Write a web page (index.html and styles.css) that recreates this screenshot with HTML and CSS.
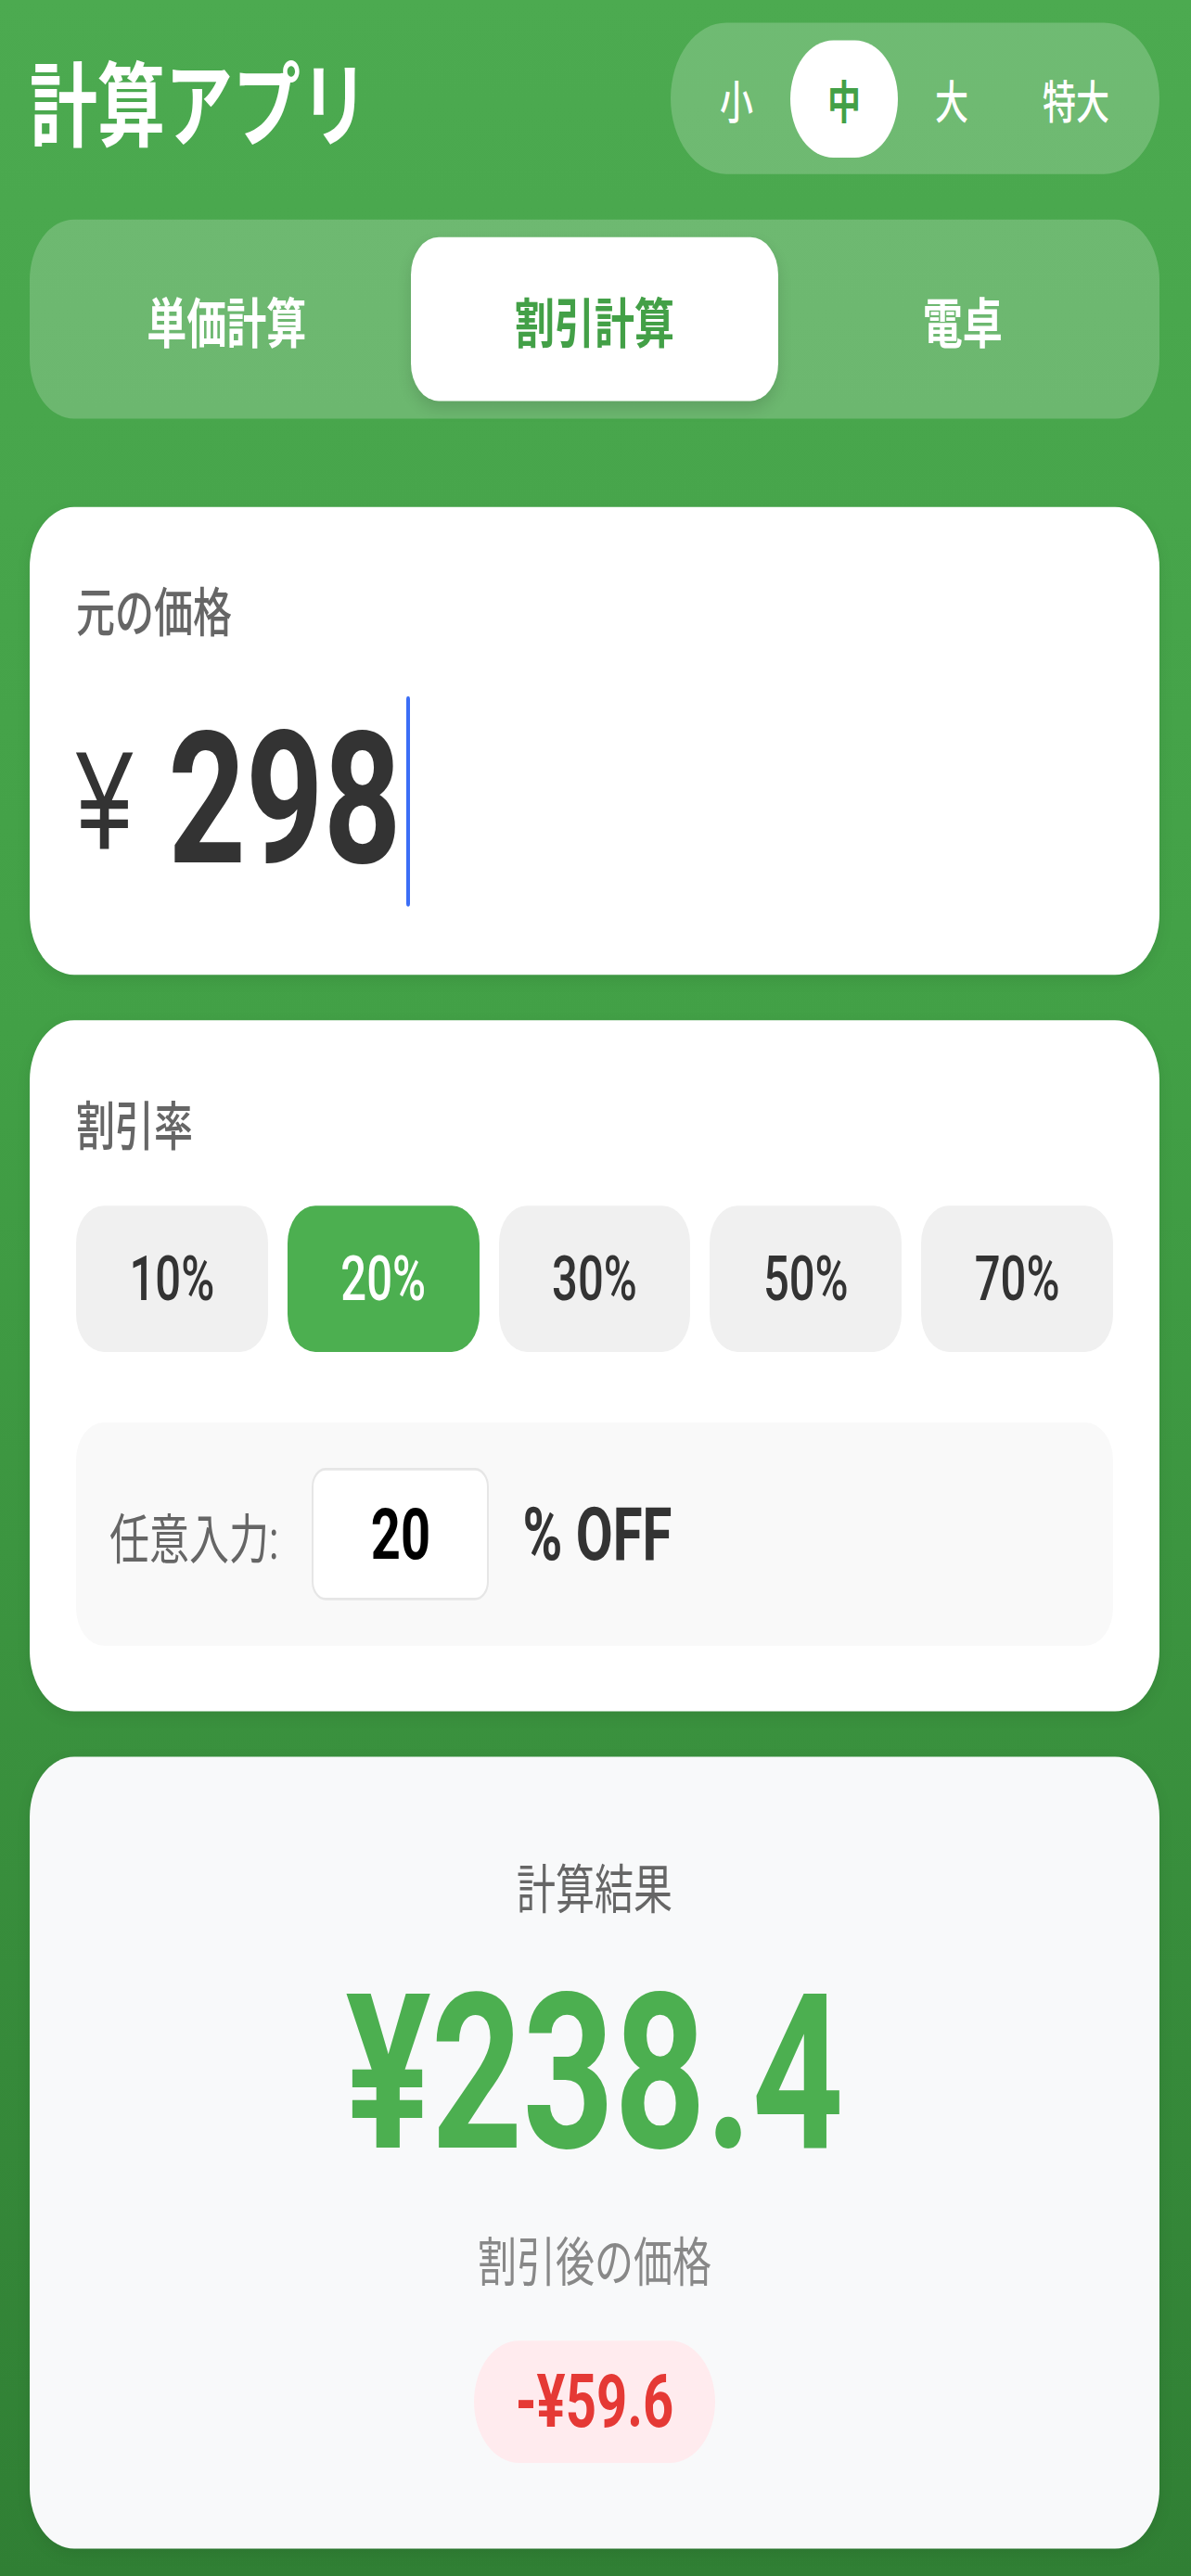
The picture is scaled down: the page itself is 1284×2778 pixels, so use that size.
FILE: index.html
```html
<!DOCTYPE html>
<html lang="ja">
<head>
<meta charset="utf-8">
<title>計算アプリ</title>
<link rel="stylesheet" href="styles.css">
</head>
<body>
<div class="app">
  <header class="header">
    <h1 class="title">計算アプリ</h1>
    <div class="size-toggle">
      <span class="size-btn">小</span>
      <span class="size-btn active">中</span>
      <span class="size-btn">大</span>
      <span class="size-btn">特大</span>
    </div>
  </header>

  <nav class="tabs">
    <div class="tab">単価計算</div>
    <div class="tab active">割引計算</div>
    <div class="tab">電卓</div>
  </nav>

  <section class="card">
    <div class="card-label">元の価格</div>
    <div class="price-row">
      <span class="yen">¥</span>
      <span class="price-value">298</span>
      <span class="caret"></span>
    </div>
  </section>

  <section class="card">
    <div class="card-label">割引率</div>
    <div class="rate-grid">
      <button class="rate-btn">10%</button>
      <button class="rate-btn active">20%</button>
      <button class="rate-btn">30%</button>
      <button class="rate-btn">50%</button>
      <button class="rate-btn">70%</button>
    </div>
    <div class="custom-row">
      <span class="custom-label">任意入力:</span>
      <input class="custom-input" type="text" value="20">
      <span class="custom-unit">% OFF</span>
    </div>
  </section>

  <section class="card result">
    <div class="result-title">計算結果</div>
    <div class="result-value">¥238.4</div>
    <div class="result-sub">割引後の価格</div>
    <div class="savings">-¥59.6</div>
  </section>
</div>
</body>
</html>
```

FILE: styles.css
```css
* {
  box-sizing: border-box;
  margin: 0;
  padding: 0;
}

html,
body {
  width: 100%;
}

body {
  min-height: 2778px;
  background: linear-gradient(180deg, #4caa50 0%, #42a046 40%, #307f34 100%);
  font-family: "Roboto", "Noto Sans CJK JP", sans-serif;
  overflow: hidden;
}

/* The design is drawn at its natural proportions and stretched vertically
   to the tall screenshot ratio. */
.app {
  transform: scaleY(1.36);
  transform-origin: top left;
  padding: 18px 34px 0 32px;
}

/* Header */
.header {
  display: flex;
  justify-content: space-between;
  align-items: center;
  height: 120px;
  margin-bottom: 36px;
}

.title {
  font-family: "Noto Sans CJK JP", sans-serif;
  font-size: 73px;
  line-height: 1;
  font-weight: 700;
  color: #fff;
}

.size-toggle {
  display: flex;
  align-items: center;
  height: 120px;
  padding: 0 14px 0 13px;
  background: rgba(255, 255, 255, 0.2);
  border-radius: 60px;
}

.size-btn {
  display: flex;
  align-items: center;
  justify-content: center;
  height: 93px;
  padding: 0 40px;
  font-family: "Noto Sans CJK JP", sans-serif;
  font-size: 36px;
  font-weight: 500;
  color: #fff;
  border-radius: 47px;
}

.size-btn.active {
  background: #fff;
  color: #43a047;
  font-weight: 700;
}

/* Tabs */
.tabs {
  display: flex;
  padding: 14px;
  background: rgba(255, 255, 255, 0.2);
  border-radius: 48px;
  margin-bottom: 70px;
}

.tab {
  flex: 1;
  display: flex;
  align-items: center;
  justify-content: center;
  height: 130px;
  font-family: "Noto Sans CJK JP", sans-serif;
  font-size: 43px;
  font-weight: 700;
  color: #fff;
  border-radius: 30px;
}

.tab.active {
  background: #fff;
  color: #43a047;
  box-shadow: 0 6px 14px rgba(0, 0, 0, 0.12);
}

/* Cards */
.card {
  background: #fff;
  border-radius: 48px;
  padding: 52px 50px;
  margin-bottom: 36px;
  box-shadow: 0 4px 14px rgba(0, 0, 0, 0.08);
}

.card-label {
  font-family: "Noto Sans CJK JP", sans-serif;
  font-size: 42px;
  line-height: 58px;
  font-weight: 500;
  color: #666;
  margin-bottom: 37px;
}

.price-row {
  display: flex;
  align-items: center;
  height: 172px;
}

.yen {
  font-family: "Liberation Sans", sans-serif;
  font-size: 110px;
  line-height: 1;
  color: #333;
  margin-right: 38px;
}

.price-value {
  font-size: 146px;
  line-height: 1;
  font-weight: 700;
  color: #333;
}

.caret {
  width: 4px;
  height: 167px;
  margin-left: 6px;
  background: #3b6ef6;
  border-radius: 2px;
}

/* Rate buttons */
.rate-grid {
  display: grid;
  grid-template-columns: repeat(5, 1fr);
  gap: 21px;
  margin-bottom: 56px;
}

.rate-btn {
  height: 116px;
  border: none;
  border-radius: 30px;
  background: #f0f0f0;
  color: #333;
  font-family: "Roboto", sans-serif;
  font-size: 49px;
  font-weight: 500;
}

.rate-btn.active {
  background: #4caf50;
  color: #fff;
}

.custom-row {
  display: flex;
  align-items: center;
  gap: 36px;
  padding: 36px;
  background: #f9f9f9;
  border-radius: 30px;
}

.custom-label {
  font-family: "Roboto", "Noto Sans CJK JP", sans-serif;
  font-size: 43px;
  color: #666;
}

.custom-input {
  width: 191px;
  height: 105px;
  background: #fff;
  border: 2px solid #e6e6e6;
  border-radius: 15px;
  text-align: center;
  font-family: "Roboto", sans-serif;
  font-size: 56px;
  font-weight: 700;
  color: #000;
  outline: none;
}

.custom-unit {
  font-family: "Roboto", sans-serif;
  font-size: 58px;
  font-weight: 700;
  color: #333;
}

/* Result */
.card.result {
  background: #f8f9fa;
  text-align: center;
  padding: 72px 50px 68px;
  margin-bottom: 0;
}

.result-title {
  font-family: "Noto Sans CJK JP", sans-serif;
  font-size: 42px;
  line-height: 60px;
  color: #666;
  margin-bottom: 18px;
}

.result-value {
  font-size: 172px;
  line-height: 202px;
  font-weight: 700;
  color: #4caf50;
  margin-bottom: 16px;
}

.result-sub {
  font-family: "Noto Sans CJK JP", sans-serif;
  font-size: 42px;
  line-height: 60px;
  color: #888;
  margin-bottom: 35px;
}

.savings {
  width: fit-content;
  margin: 0 auto;
  padding: 14px 45px;
  line-height: 69px;
  border-radius: 50px;
  background: #ffebee;
  color: #e53935;
  font-size: 58px;
  font-weight: 700;
}
```
